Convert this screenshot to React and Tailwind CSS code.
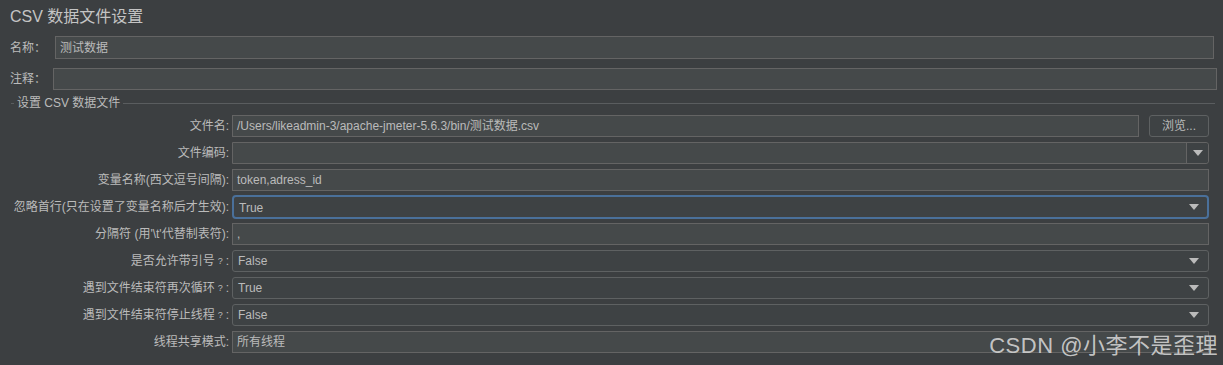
import React from "react";

const FONT = { fontFamily: '"Liberation Sans", "Noto Sans CJK SC", sans-serif' };

function Caret() {
  return (
    <svg width="10" height="6" viewBox="0 0 10 6" className="shrink-0">
      <path d="M0 0 H10 L5 6 Z" fill="#bbbbbb" />
    </svg>
  );
}

function Label({ children }) {
  return (
    <div className="h-[22px] flex items-center justify-end pr-[3px] text-[12px] text-[#bbbbbb] whitespace-nowrap">
      {children}
    </div>
  );
}

function Help() {
  return <span className="text-[9px] mx-[3px] relative top-[1px]">?</span>;
}

function TextField({ value }) {
  return (
    <div className="h-[22px] flex items-center px-[4px] bg-[#45494a] border border-[#646464] text-[12px] text-[#bbbbbb] whitespace-nowrap">
      {value}
    </div>
  );
}

function Combo({ value, focused }) {
  if (focused) {
    return (
      <div className="h-[24px] -my-[1px] flex items-center justify-between pl-[5px] pr-[8px] bg-[#3e4244] border-2 border-[#4a709a] rounded-[4px] text-[12px] text-[#bbbbbb]">
        <span className="relative top-[1px]">{value}</span>
        <Caret />
      </div>
    );
  }
  return (
    <div className="h-[22px] flex items-center justify-between pl-[5px] pr-[9px] bg-[#3e4244] border border-[#5e6162] rounded-[3px] text-[12px] text-[#bbbbbb]">
      <span>{value}</span>
      <Caret />
    </div>
  );
}

export default function App() {
  return (
    <div className="relative w-[1223px] h-[365px] bg-[#3c3f41] overflow-hidden text-[#bbbbbb]" style={FONT}>
      <div className="h-[34px] flex items-center pl-[10px] text-[16px] text-[#c4c4c4]">CSV 数据文件设置</div>

      <div className="mt-[2px] flex h-[23px] pl-[10px] pr-[9px]">
        <div className="w-[45px] flex items-center text-[12px]">名称：</div>
        <div className="flex-1 flex items-center px-[4px] bg-[#45494a] border border-[#646464] text-[12px]">测试数据</div>
      </div>

      <div className="mt-[9px] flex h-[22px] pl-[10px] pr-[6px]">
        <div className="w-[43px] flex items-center text-[12px]">注释：</div>
        <div className="flex-1 bg-[#45494a] border border-[#646464]" />
      </div>

      <div className="mt-[2px] h-[22px] flex items-center pl-[11px] pr-[8px]">
        <div className="w-[3px] h-px bg-[#5a5d5f]" />
        <span className="px-[3px] text-[12px]">设置 CSV 数据文件</span>
        <div className="flex-1 h-px bg-[#5a5d5f]" />
      </div>

      <div className="mt-[1px] grid grid-cols-[220px_1fr] gap-y-[5px] pl-[12px] pr-[14px]">
        <Label>文件名:</Label>
        <div className="flex gap-[10px]">
          <div className="flex-1">
            <TextField value="/Users/likeadmin-3/apache-jmeter-5.6.3/bin/测试数据.csv" />
          </div>
          <div className="w-[60px] h-[22px] flex items-center justify-center border border-[#5e6162] rounded-[3px] bg-[#3e4244] text-[12px]">
            浏览...
          </div>
        </div>

        <Label>文件编码:</Label>
        <div className="h-[22px] flex border border-[#646464] rounded-r-[3px]">
          <div className="flex-1 bg-[#45494a]" />
          <div className="w-[22px] flex items-center justify-center border-l border-[#646464] bg-[#3e4244] rounded-r-[3px]">
            <Caret />
          </div>
        </div>

        <Label>变量名称(西文逗号间隔):</Label>
        <TextField value="token,adress_id" />

        <Label>忽略首行(只在设置了变量名称后才生效):</Label>
        <Combo value="True" focused />

        <Label>分隔符 (用'\t'代替制表符):</Label>
        <TextField value="," />

        <Label>
          是否允许带引号<Help />:
        </Label>
        <Combo value="False" />

        <Label>
          遇到文件结束符再次循环<Help />:
        </Label>
        <Combo value="True" />

        <Label>
          遇到文件结束符停止线程<Help />:
        </Label>
        <Combo value="False" />

        <Label>线程共享模式:</Label>
        <TextField value="所有线程" />
      </div>

      <div className="absolute right-[5px] top-[329px] text-[22px] tracking-[0.5px] text-[#d4d4d4]/90 whitespace-nowrap">
        CSDN @小李不是歪理
      </div>
    </div>
  );
}
